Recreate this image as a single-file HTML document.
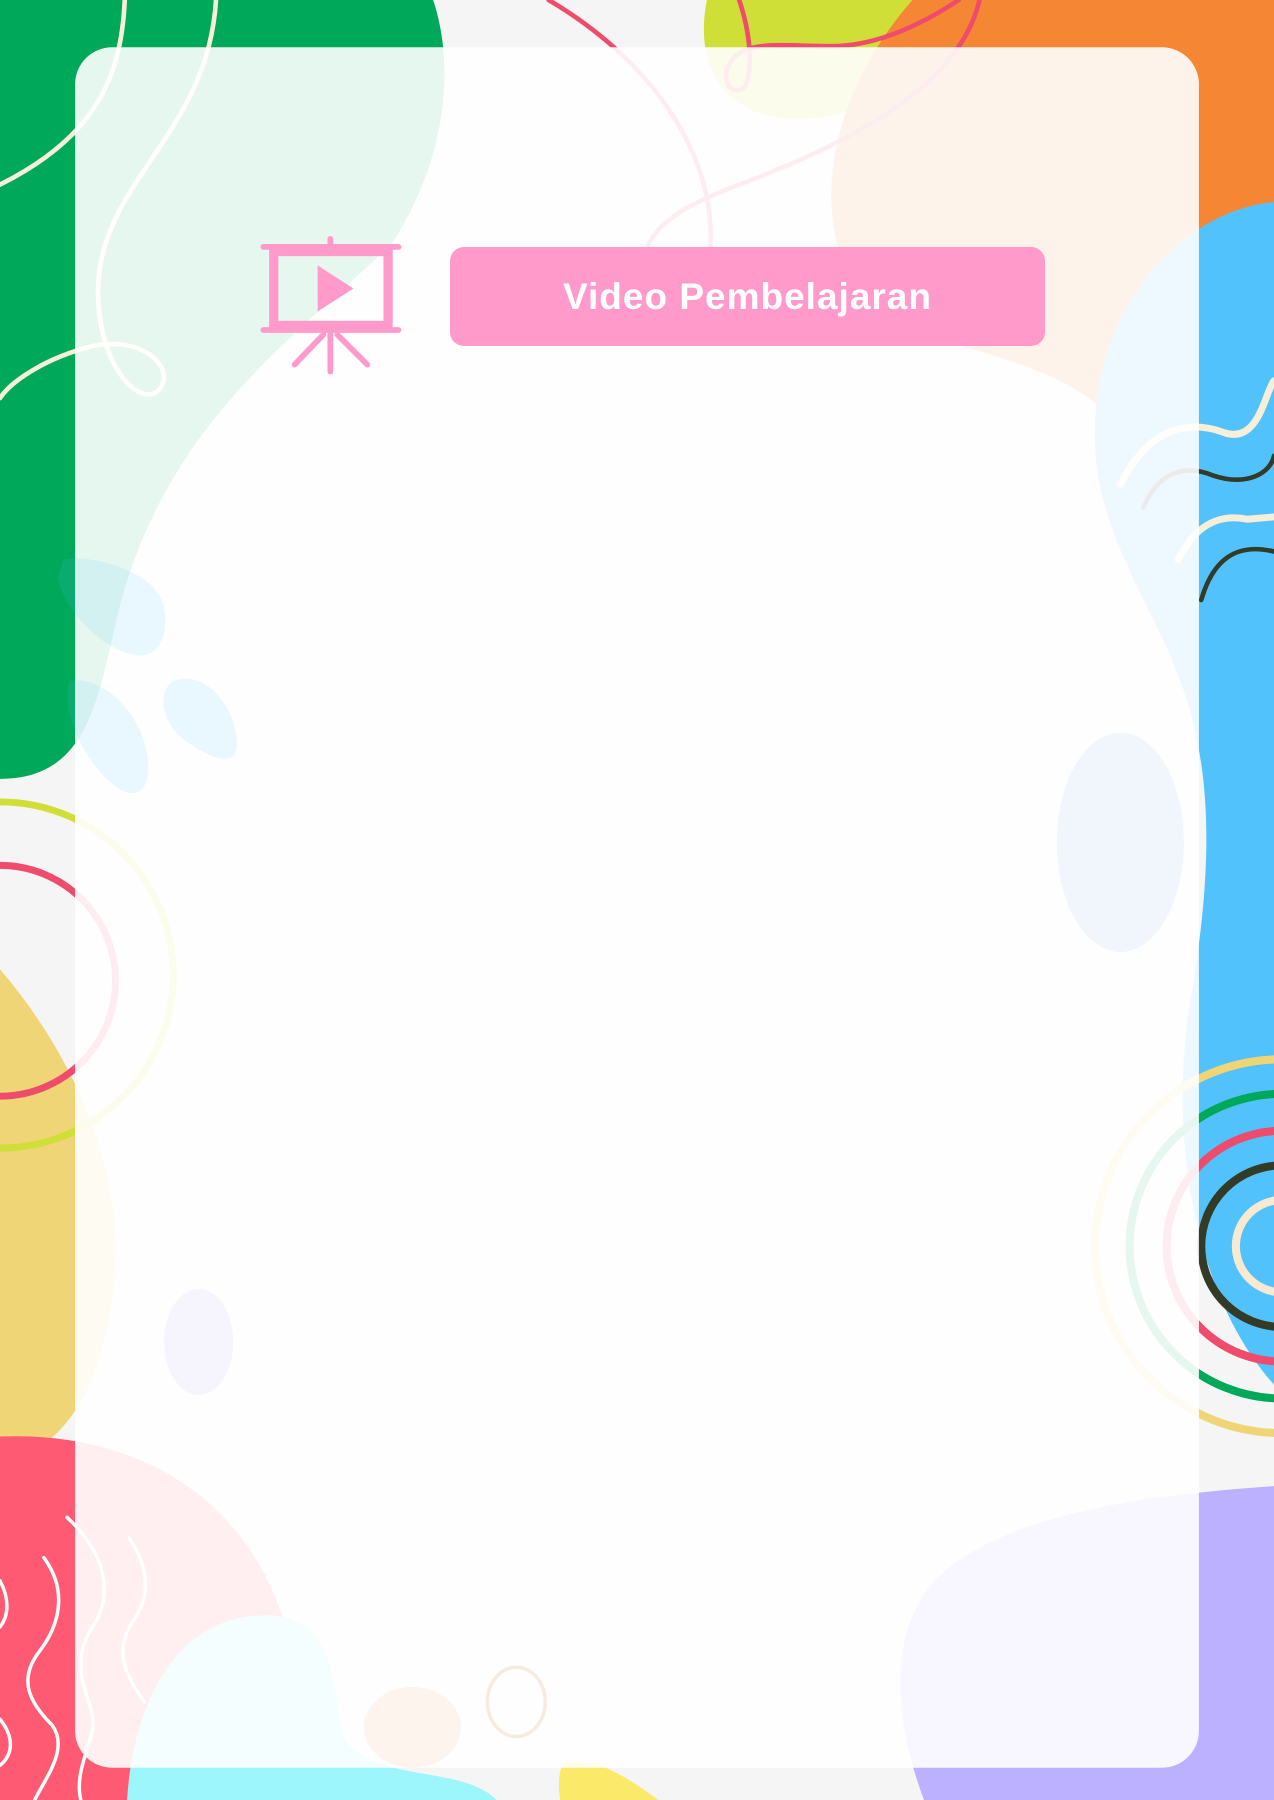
<!DOCTYPE html>
<html><head><meta charset="utf-8"><style>
html,body{margin:0;padding:0;width:1274px;height:1800px;overflow:hidden;background:#f5f5f5}
svg{position:absolute;left:0;top:0}
.title{position:absolute;left:450px;top:247px;width:595px;height:99px;background:#ff9acb;border-radius:14px;display:flex;align-items:center;justify-content:center;color:#fff;font:bold 37px "Liberation Sans",sans-serif;letter-spacing:1px}
</style></head><body>
<svg width="1274" height="1800" viewBox="0 0 1103 1560" preserveAspectRatio="none">
<rect width="1103" height="1560" fill="#f5f5f5"/>
<path d="M0 0 H375 C395 60 385 140 340 210 C260 290 150 360 105 520 C85 600 80 675 0 675 Z" fill="#00a85a"/>
<path d="M612 0 H800 C795 60 760 103 690 103 C630 103 600 60 612 0 Z" fill="#cfdf38"/>
<path d="M790 0 H1103 V175 C1040 200 990 250 960 360 C900 300 800 310 740 250 C700 180 720 80 790 0 Z" fill="#f58634"/>
<path d="M1103 175 V1200 C1040 1130 1010 1000 1030 870 C1060 700 1040 620 1000 540 C960 460 930 400 960 300 C990 220 1050 180 1103 175 Z" fill="#52c2fd"/>
<path d="M0 840 C60 910 100 1000 100 1080 C100 1150 80 1220 40 1250 H0 Z" fill="#f0d577"/>
<path d="M0 1245 C120 1240 220 1300 250 1420 C260 1470 200 1520 110 1560 H0 Z" fill="#ff5a73"/>
<path d="M110 1560 C115 1480 150 1400 230 1400 C300 1400 285 1480 300 1510 C330 1545 400 1530 430 1560 Z" fill="#9cf6fc"/>
<path d="M485 1560 C482 1540 485 1525 495 1525 C520 1525 550 1545 570 1560 Z" fill="#fbe96a"/>
<path d="M1103 1288 V1560 H800 C770 1480 770 1400 820 1360 C880 1310 1000 1295 1103 1288 Z" fill="#bbb1fe"/>
<circle cx="0" cy="850" r="100" fill="none" stroke="#ef4b6c" stroke-width="6"/>
<circle cx="0" cy="845" r="150" fill="none" stroke="#cfdf38" stroke-width="6"/>
<g fill="none" stroke-width="7">
<circle cx="1110" cy="1080" r="40" stroke="#f8e9d0"/>
<circle cx="1110" cy="1080" r="70" stroke="#333a26"/>
<circle cx="1110" cy="1080" r="100" stroke="#ef4b6c"/>
<circle cx="1110" cy="1080" r="132" stroke="#00a85a"/>
<circle cx="1110" cy="1080" r="162" stroke="#f0d577"/>
</g>
<g fill="none" stroke-linecap="round" stroke-width="4">
<path d="M0 160 C80 120 105 70 108 0" stroke="#f8efd8"/>
<path d="M187 0 C180 120 80 160 85 260 C88 320 120 350 135 340 C155 325 130 290 80 300 C40 310 10 330 0 345" stroke="#f8efd8"/>
<path d="M475 0 C560 50 620 130 615 215" stroke="#ef4b6c"/>
<path d="M640 0 C650 30 652 60 645 75 C635 85 620 70 635 50 C650 35 680 40 720 40 C760 40 800 20 830 0" stroke="#ef4b6c"/>
<path d="M848 0 C830 80 720 130 640 160 C600 175 570 190 560 215" stroke="#ef4b6c"/>
<path d="M970 420 C990 380 1020 360 1060 375 C1090 385 1095 340 1103 330" stroke="#f8efd8" stroke-width="6"/>
<path d="M990 440 C1000 415 1020 400 1050 412 C1080 422 1100 410 1103 395" stroke="#333a26"/>
<path d="M1020 485 C1035 455 1055 445 1080 450 L1103 448" stroke="#f8efd8" stroke-width="6"/>
<path d="M1040 520 C1050 485 1070 470 1103 478" stroke="#333a26"/>
<g stroke="#fff" stroke-width="3">
<path d="M38 1350 C60 1380 50 1410 35 1430 C15 1455 25 1475 45 1495 C60 1515 40 1540 30 1560"/>
<path d="M58 1315 C90 1345 100 1380 80 1410 C55 1450 85 1475 80 1500 C75 1520 65 1540 70 1560"/>
<path d="M112 1333 C130 1360 130 1385 115 1405 C95 1435 115 1460 125 1475"/>
<path d="M0 1370 C8 1385 8 1400 0 1410"/>
<path d="M0 1490 C12 1505 12 1520 0 1530"/>
</g>
</g>
<rect x="65" y="41" width="973" height="1491" rx="32" fill="#fff" fill-opacity="0.9"/>
<path d="M55 485 C80 480 130 495 140 520 C150 550 135 570 120 568 C90 565 55 530 50 500 Z" fill="#52c2fd" opacity="0.12"/>
<path d="M60 590 C90 585 125 620 128 660 C130 690 115 690 105 685 C80 670 50 620 60 590 Z" fill="#52c2fd" opacity="0.12"/>
<path d="M150 590 C180 580 205 615 205 645 C205 665 185 658 165 645 C140 630 135 600 150 590 Z" fill="#52c2fd" opacity="0.12"/>
<ellipse cx="970" cy="730" rx="55" ry="95" fill="#a7c0f0" opacity="0.15"/>
<ellipse cx="172" cy="1163" rx="30" ry="46" fill="#bbb1fe" opacity="0.12"/>
<ellipse cx="357" cy="1497" rx="42" ry="35" fill="#f0b070" opacity="0.12"/>
<ellipse cx="447" cy="1475" rx="25" ry="30" fill="none" stroke="#f0d8c0" stroke-width="3" opacity="0.5"/>
<g stroke="#ff9acb" fill="none" stroke-linecap="round" stroke-width="5">
<line x1="228" y1="214" x2="345" y2="214"/>
<line x1="228" y1="286" x2="345" y2="286"/>
<rect x="237" y="218" width="99" height="64" stroke-width="8"/>
<line x1="286" y1="207" x2="286" y2="214"/>
<line x1="286" y1="290" x2="286" y2="322"/>
<line x1="280" y1="290" x2="255" y2="316"/>
<line x1="292" y1="290" x2="318" y2="316"/>
</g>
<path d="M275 230 L306 250 L275 270 Z" fill="#ff9acb"/>
</svg>
<div class="title">Video Pembelajaran</div>
</body></html>
